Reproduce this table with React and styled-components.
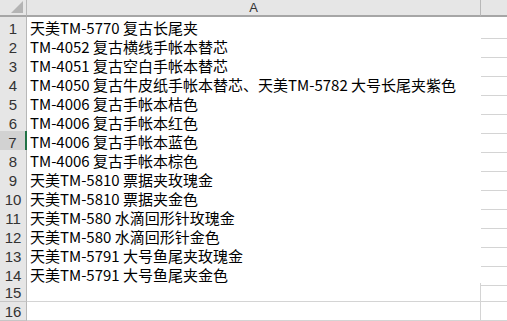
import React from 'react';
import styled, { createGlobalStyle } from 'styled-components';

const GlobalStyle = createGlobalStyle`
  html, body {
    margin: 0;
    padding: 0;
    background: #fff;
    overflow: hidden;
  }
`;

const Sheet = styled.div`
  width: 507px;
  height: 321px;
  overflow: hidden;
  font-family: "Noto Sans CJK SC", "Liberation Sans", sans-serif;
`;

const Row = styled.div`
  display: grid;
  grid-template-columns: 27px 454px 1fr;
  height: ${(p) => p.$height}px;
`;

const HeaderCell = styled.div`
  background: #e6e6e6;
  border-bottom: 2px solid #a6a6a6;
  border-right: 1px solid #b8b8b8;
  display: flex;
  align-items: center;
  justify-content: center;
  position: relative;
  font-family: "Liberation Sans", sans-serif;
  font-size: 13px;
  color: #333;
  box-sizing: border-box;
  &:last-child {
    border-right: none;
  }
`;

const CornerMark = styled.div`
  position: absolute;
  right: 3px;
  bottom: 2px;
  width: 0;
  height: 0;
  border-left: 12px solid transparent;
  border-bottom: 12px solid #b4b4b4;
`;

const RowHead = styled.div`
  background: ${(p) => (p.$active ? '#d2d2d2' : '#e6e6e6')};
  border-bottom: 1px solid #c6c6c6;
  border-right: ${(p) => (p.$active ? '2px solid #217346' : '1px solid #b8b8b8')};
  display: flex;
  align-items: center;
  justify-content: center;
  font-family: "Liberation Sans", sans-serif;
  font-size: 15px;
  color: #333;
  padding-top: 1px;
  box-sizing: border-box;
`;

const Cell = styled.div`
  border-bottom: ${(p) => (p.$filled ? '1px solid #fff' : '1px solid #d4d4d4')};
  border-right: ${(p) => (p.$filled ? '1px solid #fff' : '1px solid #d4d4d4')};
  display: flex;
  align-items: center;
  padding-left: 3px;
  font-size: 15px;
  color: #000;
  white-space: nowrap;
  overflow: visible;
  box-sizing: border-box;
`;

const EmptyCell = styled.div`
  border-bottom: 1px solid #d4d4d4;
  box-sizing: border-box;
`;

const items = [
  '天美TM-5770 复古长尾夹',
  'TM-4052 复古横线手帐本替芯',
  'TM-4051 复古空白手帐本替芯',
  'TM-4050 复古牛皮纸手帐本替芯、天美TM-5782 大号长尾夹紫色',
  'TM-4006 复古手帐本桔色',
  'TM-4006 复古手帐本红色',
  'TM-4006 复古手帐本蓝色',
  'TM-4006 复古手帐本棕色',
  '天美TM-5810 票据夹玫瑰金',
  '天美TM-5810 票据夹金色',
  '天美TM-580 水滴回形针玫瑰金',
  '天美TM-580 水滴回形针金色',
  '天美TM-5791 大号鱼尾夹玫瑰金',
  '天美TM-5791 大号鱼尾夹金色',
  '',
  '',
];

export default function App() {
  return (
    <Sheet>
      <GlobalStyle />
      <Row $height={17}>
        <HeaderCell>
          <CornerMark />
        </HeaderCell>
        <HeaderCell>A</HeaderCell>
        <HeaderCell />
      </Row>
      {items.map((text, i) => (
        <Row key={i} $height={19}>
          <RowHead $active={i === 6}>{i + 1}</RowHead>
          <Cell $filled={text !== ''}>{text}</Cell>
          <EmptyCell />
        </Row>
      ))}
    </Sheet>
  );
}
